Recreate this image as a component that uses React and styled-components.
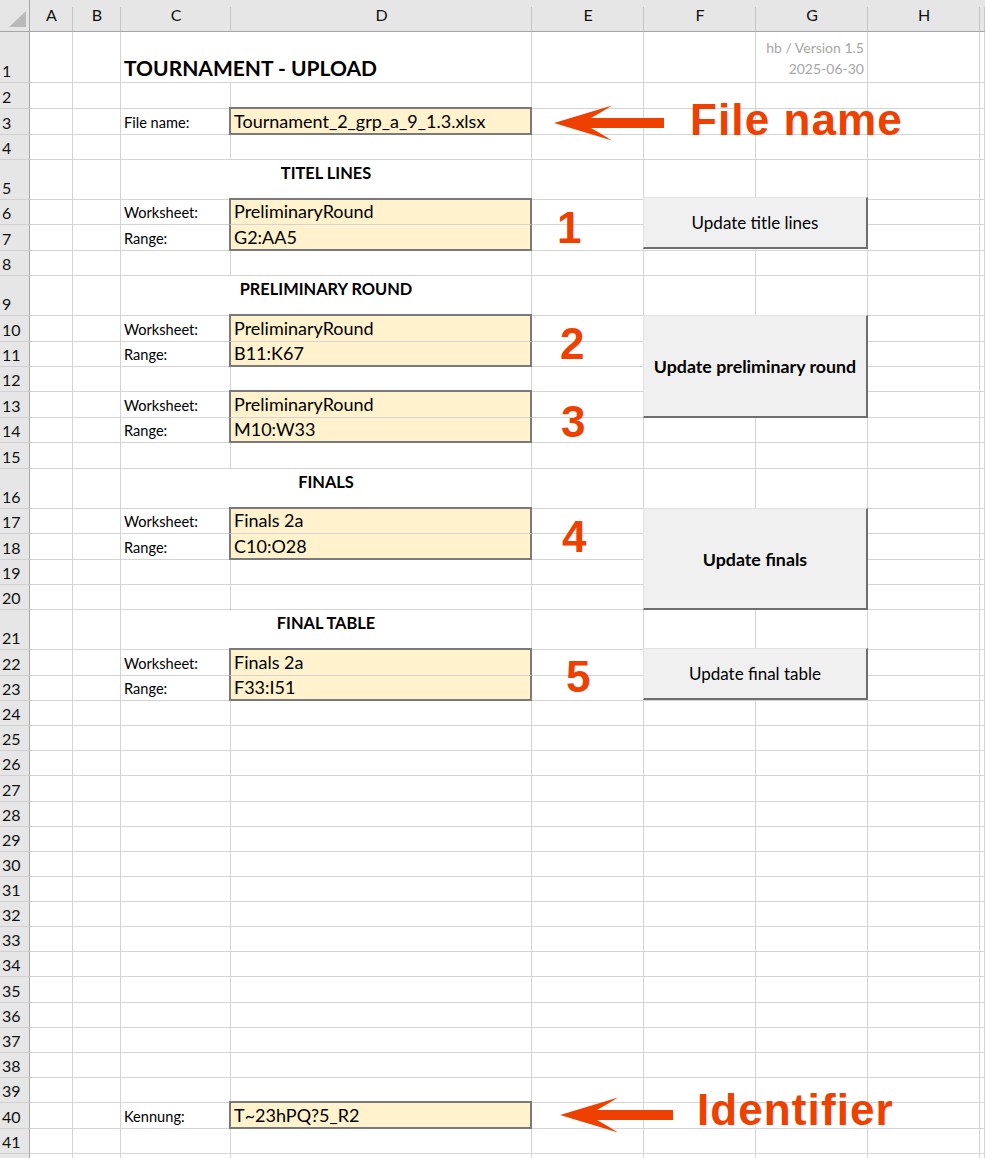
import React from 'react';
import styled, { createGlobalStyle } from 'styled-components';

const GRID = '#d4d4d4';
const HEAD_BG = '#e6e6e6';
const ACCENT = '#ee4000';
const SHEET_FONT = `'Lato', 'Liberation Sans', sans-serif`;
const SHAPE_FONT = `'Liberation Sans', Arial, sans-serif`;

const COLS = [30, 43, 48, 110, 301, 112, 112, 112, 112, 5];
const LETTERS = ['', 'A', 'B', 'C', 'D', 'E', 'F', 'G', 'H', ''];
const HEIGHTS = {
  1: 51, 2: 26, 3: 26, 4: 25, 5: 40, 6: 25, 7: 26, 8: 25, 9: 40, 10: 26, 11: 25,
  12: 25, 13: 26, 14: 25, 15: 26, 16: 40, 17: 25, 18: 26, 19: 25, 20: 25, 21: 40,
  22: 26, 23: 25, 40: 25.5, 41: 25.5, 42: 25,
};
const ROW_COUNT = 42;
const LAST_VISIBLE = 41;
const rowHeight = (n) => HEIGHTS[n] ?? 25.125;

// merged C:D heading rows
const MERGED = [5, 9, 16, 21];

const LABELS = [
  [3, 'File name:'], [6, 'Worksheet:'], [7, 'Range:'], [10, 'Worksheet:'], [11, 'Range:'],
  [13, 'Worksheet:'], [14, 'Range:'], [17, 'Worksheet:'], [18, 'Range:'],
  [22, 'Worksheet:'], [23, 'Range:'], [40, 'Kennung:'],
];

const INPUTS = [
  [[3, 'Tournament_2_grp_a_9_1.3.xlsx']],
  [[6, 'PreliminaryRound'], [7, 'G2:AA5']],
  [[10, 'PreliminaryRound'], [11, 'B11:K67']],
  [[13, 'PreliminaryRound'], [14, 'M10:W33']],
  [[17, 'Finals 2a'], [18, 'C10:O28']],
  [[22, 'Finals 2a'], [23, 'F33:I51']],
  [[40, 'T~23hPQ?5_R2']],
];

const SECTIONS = [
  [5, 'TITEL LINES'], [9, 'PRELIMINARY ROUND'], [16, 'FINALS'], [21, 'FINAL TABLE'],
];

const BUTTONS = [
  { row: 6, span: 2, text: 'Update title lines', bold: false, lift: 2 },
  { row: 10, span: 4, text: 'Update preliminary round', bold: true, lift: 0 },
  { row: 17, span: 4, text: 'Update finals', bold: true, lift: 0 },
  { row: 22, span: 2, text: 'Update final table', bold: false, lift: 1 },
];

const STEPS = [
  { n: 1, row: 6, dx: 25, dy: 6 },
  { n: 2, row: 10, dx: 28, dy: 6 },
  { n: 3, row: 13, dx: 29, dy: 8 },
  { n: 4, row: 17, dx: 30, dy: 6 },
  { n: 5, row: 22, dx: 34, dy: 5 },
];

const CALLOUTS = [
  { row: 2, text: 'File name', arrowX: 22, arrowY: 22, width: 110, gap: 26, textY: 15 },
  { row: 39, text: 'Identifier', arrowX: 28, arrowY: 19, width: 113, gap: 24, textY: 10 },
];

const GlobalStyle = createGlobalStyle`
  html, body {
    margin: 0;
    padding: 0;
    background: #ffffff;
    overflow: hidden;
  }
  body {
    font-family: ${SHEET_FONT};
    color: #000;
  }
`;

const Sheet = styled.div`
  display: grid;
  width: 985px;
  height: 1158px;
  overflow: hidden;
  grid-template-columns: ${COLS.map((w) => `${w}px`).join(' ')};
  grid-template-rows: 32px ${Array.from({ length: ROW_COUNT }, (_, i) => `${rowHeight(i + 1)}px`).join(' ')};
`;

const place = (p) => `
  grid-row: ${p.$row} / span ${p.$rows || 1};
  grid-column: ${p.$col} / span ${p.$cols || 1};
`;

const Corner = styled.div`
  grid-row: 1;
  grid-column: 1;
  background: ${HEAD_BG};
  border-right: 1px solid #a6a6a6;
  border-bottom: 1px solid #a6a6a6;
  display: flex;
  align-items: flex-end;
  justify-content: flex-end;
  padding: 0 3px 4px 0;
  svg { display: block; }
`;

const ColHeader = styled.div`
  ${place}
  position: relative;
  background: ${HEAD_BG};
  border-bottom: 1px solid #a6a6a6;
  display: flex;
  justify-content: center;
  padding-top: 6px;
  font-size: 16px;
  line-height: 18px;
  color: #111;

  &::after {
    content: '';
    position: absolute;
    right: 0;
    top: 7px;
    bottom: 0;
    width: 1px;
    background: #c6c6c6;
  }
`;

const RowHeader = styled.div`
  ${place}
  background: ${HEAD_BG};
  border-right: 1px solid #a6a6a6;
  border-bottom: 1px solid #d0d0d0;
  display: flex;
  align-items: flex-end;
  padding: 0 0 1px 2px;
  font-size: 16px;
  line-height: 20px;
  color: #111;
  overflow: hidden;
`;

const Cell = styled.div`
  ${place}
  background: #fff;
  border-bottom: 1px solid ${GRID};
  border-right: ${(p) => (p.$open ? 'none' : `1px solid ${GRID}`)};
`;

const SectionTitle = styled(Cell)`
  display: flex;
  justify-content: center;
  align-items: flex-start;
  padding-top: 4px;
  font-size: 16.4px;
  font-weight: 700;
  line-height: 18px;
`;

const Title = styled.div`
  ${place}
  display: flex;
  align-items: flex-end;
  padding: 0 0 5px 3px;
  font-size: 21px;
  font-weight: 700;
  line-height: 21px;
  white-space: nowrap;
`;

const VersionNote = styled.div`
  ${place}
  display: flex;
  flex-direction: column;
  align-items: flex-end;
  padding: 5px 4px 0 0;
  font-size: 14px;
  line-height: 21px;
  color: #a6a6a6;
  white-space: nowrap;
`;

const Label = styled.div`
  ${place}
  display: flex;
  align-items: flex-end;
  padding: 0 0 5px 3px;
  font-size: 14.6px;
  line-height: 14px;
  white-space: nowrap;
`;

const InputCell = styled.div`
  ${place}
  display: flex;
  align-items: flex-end;
  margin-left: -2px;
  margin-top: ${(p) => (p.$first ? '-2px' : '0')};
  padding: 0 0 ${(p) => (p.$last ? '3px' : '4px')} 3px;
  background: #fff2cc;
  border-left: 2px solid #7a7a7a;
  border-right: 2px solid #7a7a7a;
  border-top: ${(p) => (p.$first ? '2px solid #7a7a7a' : 'none')};
  border-bottom: ${(p) => (p.$last ? '2px solid #7a7a7a' : `1px solid ${GRID}`)};
  font-size: 18px;
  line-height: 17px;
  white-space: nowrap;
`;

const MacroButton = styled.div`
  ${place}
  display: flex;
  align-items: center;
  justify-content: center;
  margin: ${(p) => `-${1 + p.$lift}px 0 ${p.$lift}px -1px`};
  background: #f0f0f0;
  border-top: 1px solid #e2e2e2;
  border-left: 1px solid #e2e2e2;
  border-right: 2px solid #6e6e6e;
  border-bottom: 2px solid #6e6e6e;
  font-size: ${(p) => (p.$bold ? '17.8px' : '17px')};
  font-weight: ${(p) => (p.$bold ? 700 : 400)};
  color: #000;
  white-space: nowrap;
`;

const StepNumber = styled.div`
  ${place}
  padding: ${(p) => `${p.$dy}px 0 0 ${p.$dx}px`};
  font-family: ${SHAPE_FONT};
  font-size: 44px;
  font-weight: 700;
  line-height: 44px;
  color: ${ACCENT};
`;

const Callout = styled.div`
  ${place}
  display: flex;
  align-items: flex-start;
  white-space: nowrap;
`;

const ArrowIcon = styled.svg`
  flex: none;
  display: block;
  margin: ${(p) => `${p.$y}px 0 0 ${p.$x}px`};
`;

const CalloutText = styled.span`
  margin: ${(p) => `${p.$y}px 0 0 ${p.$gap}px`};
  font-family: ${SHAPE_FONT};
  font-size: 44px;
  font-weight: 700;
  line-height: 44px;
  letter-spacing: 1.1px;
  color: ${ACCENT};
`;

const Arrow = ({ x, y, width }) => (
  <ArrowIcon $x={x} $y={y} width={width} height={36} viewBox={`0 0 ${width} 36`}>
    <path
      d={`M0 18 L58 0.5 Q46 8 37 13 L${width} 13 L${width} 23 L37 23 Q46 28 58 35.5 Z`}
      fill={ACCENT}
    />
  </ArrowIcon>
);

const grid = (sheetRow) => sheetRow + 1;

export default function App() {
  const background = [];

  background.push(
    <Corner key="corner">
      <svg width="17" height="16" viewBox="0 0 17 16">
        <polygon points="0,16 17,0 17,16" fill="#b9b9b9" />
      </svg>
    </Corner>
  );

  for (let c = 2; c <= COLS.length; c++) {
    background.push(
      <ColHeader key={`h${c}`} $row={1} $col={c}>
        {LETTERS[c - 1]}
      </ColHeader>
    );
  }

  for (let r = 1; r <= ROW_COUNT; r++) {
    background.push(
      <RowHeader key={`r${r}`} $row={grid(r)} $col={1}>
        {r <= LAST_VISIBLE ? r : null}
      </RowHeader>
    );
    for (let c = 2; c <= COLS.length; c++) {
      const merged = MERGED.includes(r);
      if (merged && c === 5) continue;
      if (merged && c === 4) {
        const title = SECTIONS.find(([row]) => row === r)[1];
        background.push(
          <SectionTitle key={`c${r}-${c}`} $row={grid(r)} $col={4} $cols={2}>
            {title}
          </SectionTitle>
        );
        continue;
      }
      background.push(
        <Cell key={`c${r}-${c}`} $row={grid(r)} $col={c} $open={r === 1 && c === 4} />
      );
    }
  }

  return (
    <>
      <GlobalStyle />
      <Sheet>
        {background}

        <Title $row={grid(1)} $col={4} $cols={3}>TOURNAMENT - UPLOAD</Title>
        <VersionNote $row={grid(1)} $col={8}>
          <span>hb / Version 1.5</span>
          <span>2025-06-30</span>
        </VersionNote>

        {LABELS.map(([row, text]) => (
          <Label key={`l${row}`} $row={grid(row)} $col={4}>{text}</Label>
        ))}

        {INPUTS.map((group) =>
          group.map(([row, value], i) => (
            <InputCell
              key={`i${row}`}
              $row={grid(row)}
              $col={5}
              $first={i === 0}
              $last={i === group.length - 1}
            >
              {value}
            </InputCell>
          ))
        )}

        {BUTTONS.map((b) => (
          <MacroButton
            key={b.text}
            $row={grid(b.row)}
            $rows={b.span}
            $col={7}
            $cols={2}
            $bold={b.bold}
            $lift={b.lift}
          >
            {b.text}
          </MacroButton>
        ))}

        {STEPS.map((s) => (
          <StepNumber key={s.n} $row={grid(s.row)} $rows={2} $col={6} $dx={s.dx} $dy={s.dy}>
            {s.n}
          </StepNumber>
        ))}

        {CALLOUTS.map((c) => (
          <Callout key={c.text} $row={grid(c.row)} $rows={3} $col={6} $cols={4}>
            <Arrow x={c.arrowX} y={c.arrowY} width={c.width} />
            <CalloutText $gap={c.gap} $y={c.textY}>{c.text}</CalloutText>
          </Callout>
        ))}
      </Sheet>
    </>
  );
}
